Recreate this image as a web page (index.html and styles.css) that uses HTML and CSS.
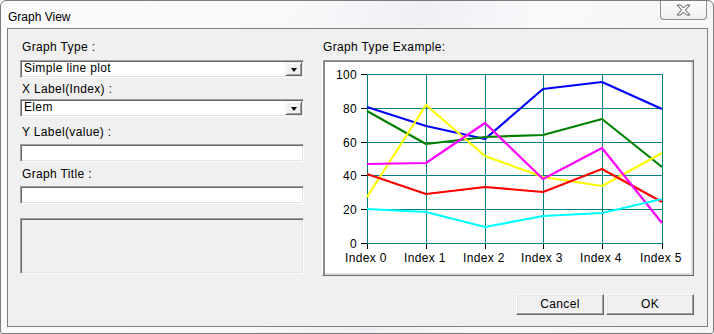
FILE: index.html
```html
<!DOCTYPE html>
<html lang="en">
<head>
    <meta charset="UTF-8">
    <title>Graph View</title>
    <link rel="stylesheet" href="styles.css">
</head>
<body>
<div class="window">
    <div class="titlebar">
        <span class="title">Graph View</span>
        <span class="close">
            <svg width="15" height="12" viewBox="0 0 15 12">
                <polygon points="1,1 4.5,1 7.5,4 10.5,1 14,1 9.5,6 14,11 10.5,11 7.5,8 4.5,11 1,11 5.5,6"
                         fill="#f6f6f6" stroke="#5a5a5a" stroke-width="1" stroke-linejoin="round"/>
            </svg>
        </span>
    </div>
    <div class="client">
        <div class="main">
            <div class="left">
                <div class="label">Graph Type :</div>
                <div class="combo first">
                    <span class="combo-text">Simple line plot</span>
                    <span class="drop"><i></i></span>
                </div>
                <div class="label l2">X Label(Index) :</div>
                <div class="combo second">
                    <span class="combo-text">Elem</span>
                    <span class="drop"><i></i></span>
                </div>
                <div class="label l3">Y Label(value) :</div>
                <div class="field"></div>
                <div class="label l4">Graph Title :</div>
                <div class="field"></div>
                <div class="note"></div>
            </div>
            <div class="right">
                <div class="label example">Graph Type Example:</div>
                <div class="chart">
                    <svg width="370" height="215" viewBox="0 0 370 215">
                        <!-- grid -->
                        <g stroke="#008080" stroke-width="1" shape-rendering="crispEdges">
                            <line x1="44.5" y1="14" x2="44.5" y2="184"/>
                            <line x1="103.5" y1="14" x2="103.5" y2="184"/>
                            <line x1="162.5" y1="14" x2="162.5" y2="184"/>
                            <line x1="220.5" y1="14" x2="220.5" y2="184"/>
                            <line x1="279.5" y1="14" x2="279.5" y2="184"/>
                            <line x1="339.5" y1="14" x2="339.5" y2="184"/>
                            <line x1="44" y1="14.5" x2="340" y2="14.5"/>
                            <line x1="44" y1="48.5" x2="340" y2="48.5"/>
                            <line x1="44" y1="82.5" x2="340" y2="82.5"/>
                            <line x1="44" y1="115.5" x2="340" y2="115.5"/>
                            <line x1="44" y1="149.5" x2="340" y2="149.5"/>
                            <line x1="44" y1="183.5" x2="340" y2="183.5"/>
                        </g>
                        <!-- ticks -->
                        <g stroke="#000" stroke-width="1" shape-rendering="crispEdges">
                            <line x1="38" y1="14.5" x2="44" y2="14.5"/>
                            <line x1="38" y1="48.5" x2="44" y2="48.5"/>
                            <line x1="38" y1="82.5" x2="44" y2="82.5"/>
                            <line x1="38" y1="115.5" x2="44" y2="115.5"/>
                            <line x1="38" y1="149.5" x2="44" y2="149.5"/>
                            <line x1="38" y1="183.5" x2="44" y2="183.5"/>
                            <line x1="44.5" y1="184" x2="44.5" y2="189"/>
                            <line x1="103.5" y1="184" x2="103.5" y2="189"/>
                            <line x1="162.5" y1="184" x2="162.5" y2="189"/>
                            <line x1="220.5" y1="184" x2="220.5" y2="189"/>
                            <line x1="279.5" y1="184" x2="279.5" y2="189"/>
                            <line x1="339.5" y1="184" x2="339.5" y2="189"/>
                        </g>
                        <g class="axis-text" text-anchor="end">
                            <text x="34" y="19">100</text>
                            <text x="34" y="53">80</text>
                            <text x="34" y="87">60</text>
                            <text x="34" y="120">40</text>
                            <text x="34" y="154">20</text>
                            <text x="34" y="188">0</text>
                        </g>
                        <g class="axis-text" text-anchor="middle">
                            <text x="43" y="202">Index 0</text>
                            <text x="102" y="202">Index 1</text>
                            <text x="161" y="202">Index 2</text>
                            <text x="219" y="202">Index 3</text>
                            <text x="278" y="202">Index 4</text>
                            <text x="338" y="202">Index 5</text>
                        </g>
                        <!-- data -->
                        <g fill="none" stroke-width="2.2" stroke-linejoin="round">
                            <polyline stroke="#0000ff" points="44,47 103,66 162,79 220,29 279,22 339,49"/>
                            <polyline stroke="#008000" points="44,51 103,84 162,77 220,75 279,59 339,107"/>
                            <polyline stroke="#ffff00" points="44,137 103,45 162,96 220,117 279,126 339,93"/>
                            <polyline stroke="#ff0000" points="44,114 103,134 162,127 220,132 279,109 339,142"/>
                            <polyline stroke="#ff00ff" points="44,104 103,103 162,63 220,119 279,88 339,163"/>
                            <polyline stroke="#00ffff" points="44,149 103,152 162,167 220,156 279,153 339,139"/>
                        </g>
                    </svg>
                </div>
            </div>
        </div>
        <div class="footer">
            <div class="btn">Cancel</div>
            <div class="btn">OK</div>
        </div>
    </div>
</div>
</body>
</html>
```

FILE: styles.css
```css
* {
    margin: 0;
    padding: 0;
    box-sizing: border-box;
}

body {
    background: #ffffff;
    font-family: "Liberation Sans", Arial, sans-serif;
    font-size: 12px;
    letter-spacing: 0.35px;
    color: #000;
}

.window {
    width: 714px;
    height: 334px;
    border: 1px solid #7b7b7b;
    border-radius: 6px 6px 3px 3px;
    background: linear-gradient(100deg, #fbfbfc 0%, #f7f8fa 40%, #eef0f3 55%, #f8f9fb 70%, #f4f5f7 100%);
}

.titlebar {
    display: flex;
    height: 27px;
}

.title {
    padding: 9px 0 0 7px;
    line-height: 14px;
    letter-spacing: 0;
}

.close {
    display: flex;
    align-items: center;
    justify-content: center;
    width: 47px;
    height: 19px;
    margin: 0 6px 0 auto;
    border: 1px solid #8d8d8d;
    border-top: none;
    border-radius: 0 0 4px 4px;
    background: linear-gradient(#fdfdfd, #eceef0);
}

.client {
    height: 299px;
    margin: 0 5px 0 6px;
    border: 1px solid #7f7f7f;
    background: #f0f0f0;
}

.main {
    display: flex;
    padding: 11px 13px 0 12px;
}

.left {
    width: 284px;
    display: flex;
    flex-direction: column;
}

.right {
    width: 372px;
    margin-left: 18px;
}

.label {
    line-height: 14px;
    padding-left: 2px;
    white-space: nowrap;
}

.label.l2 { margin-top: 4px; }
.label.l3 { margin-top: 8px; }
.label.l4 { margin-top: 5px; }
.label.example { padding-left: 1px; }

.combo, .field, .note {
    border: 1px solid;
    border-color: #a0a0a0 #ffffff #ffffff #a0a0a0;
    box-shadow: inset 1px 1px 0 #696969, inset -1px -1px 0 #e3e3e3;
    background: #fff;
}

.combo {
    display: flex;
    align-items: flex-start;
    height: 18px;
}

.combo.first { margin-top: 6px; }
.combo.second { margin-top: 3px; }

.combo-text {
    line-height: 13px;
    padding: 1px 0 0 3px;
}

.drop {
    display: flex;
    align-items: center;
    justify-content: center;
    width: 17px;
    align-self: stretch;
    margin: 1px 1px 1px auto;
    background: #f0f0f0;
    border: 1px solid;
    border-color: #f0f0f0 #696969 #696969 #f0f0f0;
    box-shadow: inset 1px 1px 0 #fff, inset -1px -1px 0 #a0a0a0;
}

.drop i {
    width: 1px;
    height: 0;
    border-top: 4px solid #000;
    border-left: 3px solid transparent;
    border-right: 3px solid transparent;
    margin-top: 1px;
}

.field {
    height: 18px;
    margin-top: 5px;
}

.note {
    height: 56px;
    margin-top: 14px;
    background: #f0f0f0;
}

.chart {
    width: 372px;
    height: 217px;
    margin-top: 5px;
    border: 1px solid;
    border-color: #fcfcfc #6d6d6d #6d6d6d #fcfcfc;
    box-shadow: inset 2px 2px 0 #8a8a8a, inset -2px -2px 0 #dcdcdc;
    background: #fff;
}

.chart svg {
    display: block;
}

.axis-text {
    font-family: "Liberation Sans", Arial, sans-serif;
    font-size: 12px;
    fill: #000;
}

.footer {
    display: flex;
    justify-content: flex-end;
    gap: 2px;
    margin-top: 18px;
    padding-right: 13px;
}

.btn {
    width: 88px;
    height: 21px;
    line-height: 19px;
    text-align: center;
    background: #f0f0f0;
    border: 1px solid;
    border-color: #ffffff #696969 #696969 #ffffff;
    box-shadow: inset -1px -1px 0 #a0a0a0, inset 1px 1px 0 #e3e3e3;
}
```
